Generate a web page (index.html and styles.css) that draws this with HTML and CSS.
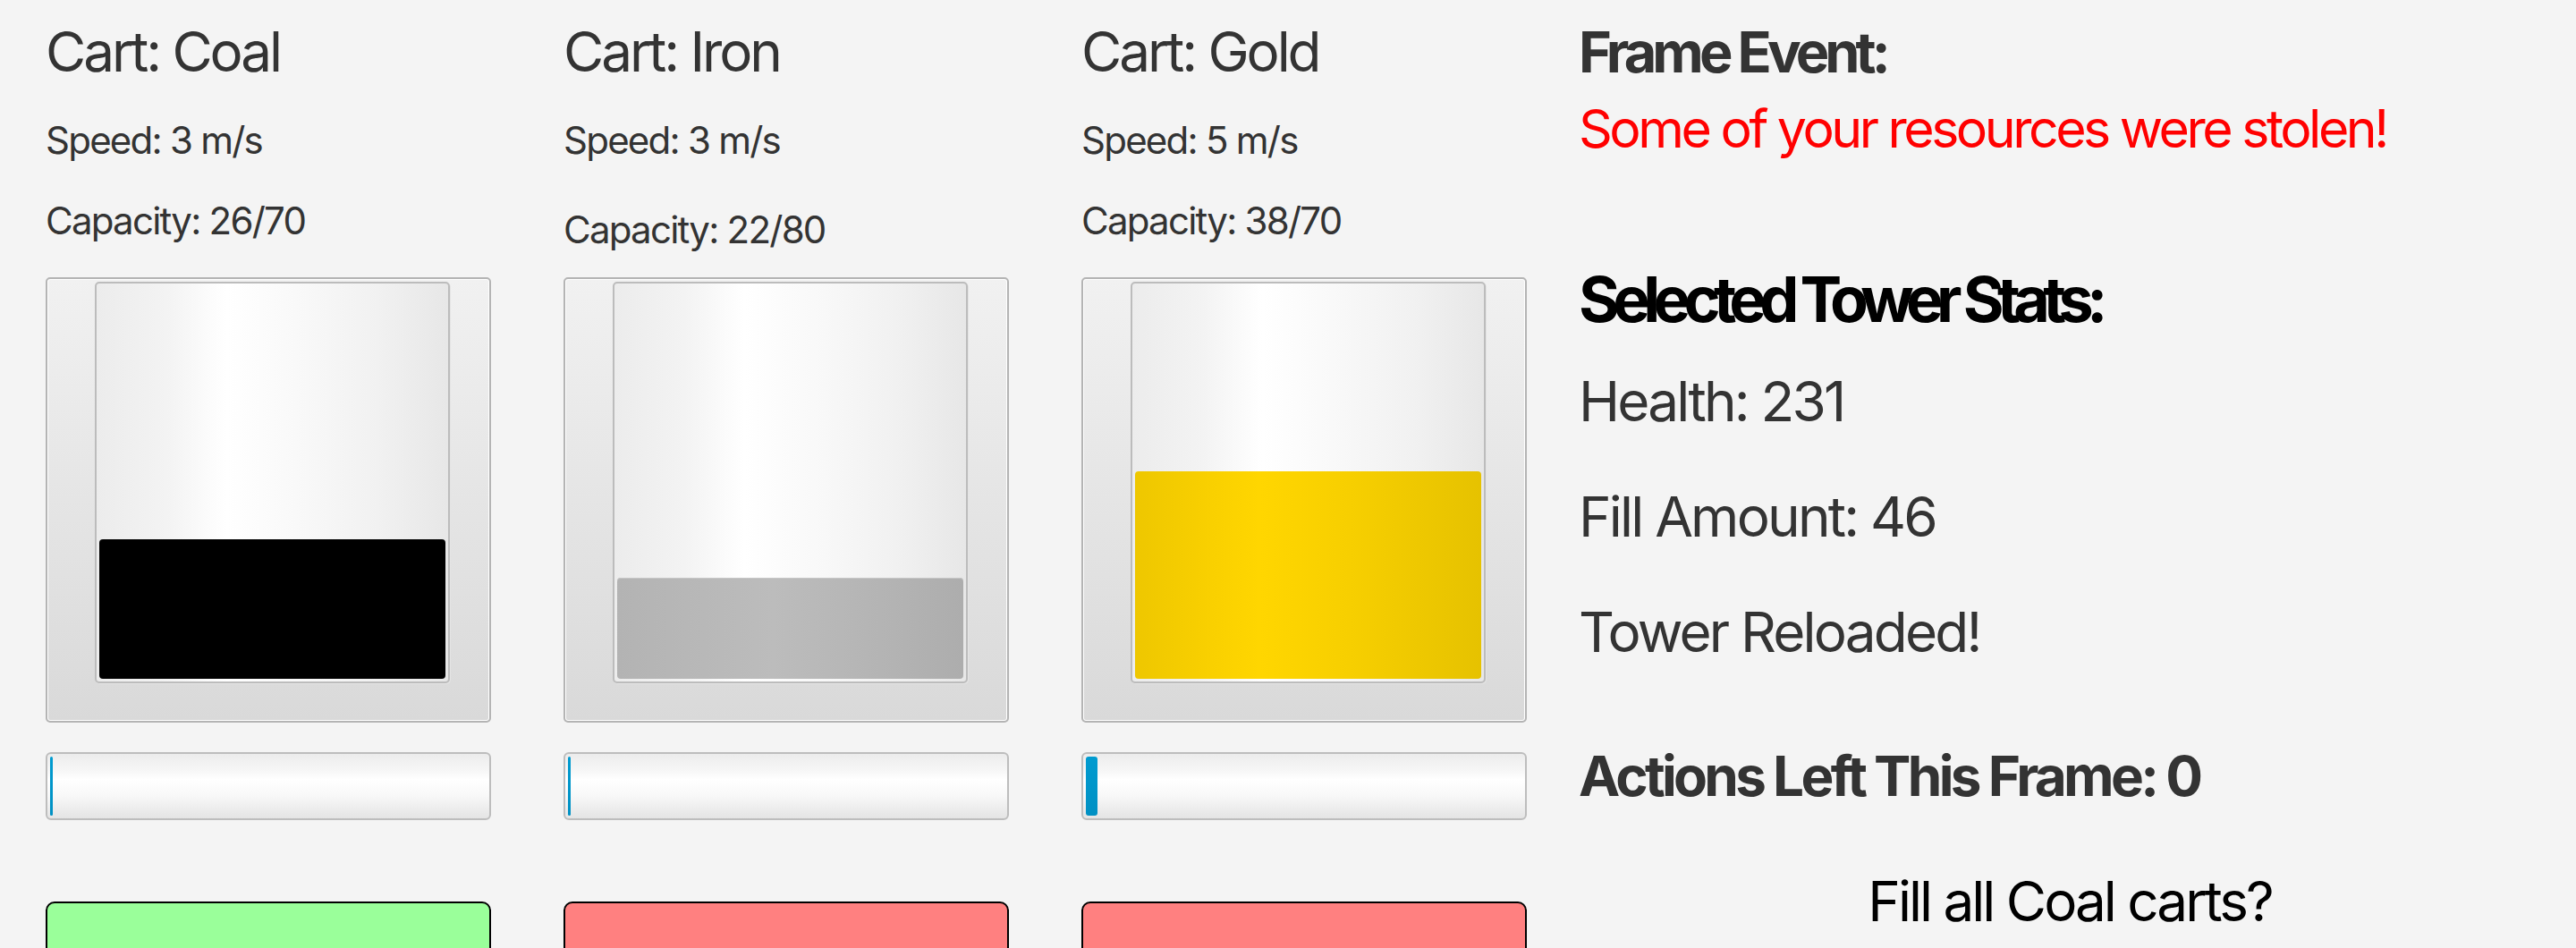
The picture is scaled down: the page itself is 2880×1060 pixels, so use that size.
FILE: index.html
```html
<!DOCTYPE html>
<html lang="en">
<head>
    <meta charset="UTF-8">
    <title>Mine Carts</title>
    <link rel="stylesheet" href="styles.css">
</head>
<body>

<div class="screen">
    <div class="carts">
        <div class="cart">
            <div class="cart-head">
                <div class="cart-title">Cart: Coal</div>
                <div class="cart-stat speed">Speed: 3 m/s</div>
                <div class="cart-stat capacity">Capacity: 26/70</div>
            </div>
            <div class="cart-box">
                <div class="tube">
                    <div class="fill coal" style="height: 156px"></div>
                </div>
            </div>
            <div class="progress"><div class="progress-bar" style="width: 3px"></div></div>
            <button class="cart-button ready"></button>
        </div>

        <div class="cart">
            <div class="cart-head">
                <div class="cart-title">Cart: Iron</div>
                <div class="cart-stat speed">Speed: 3 m/s</div>
                <div class="cart-stat capacity shifted">Capacity: 22/80</div>
            </div>
            <div class="cart-box">
                <div class="tube">
                    <div class="fill iron" style="height: 113px"></div>
                </div>
            </div>
            <div class="progress"><div class="progress-bar" style="width: 3px"></div></div>
            <button class="cart-button blocked"></button>
        </div>

        <div class="cart">
            <div class="cart-head">
                <div class="cart-title">Cart: Gold</div>
                <div class="cart-stat speed">Speed: 5 m/s</div>
                <div class="cart-stat capacity">Capacity: 38/70</div>
            </div>
            <div class="cart-box">
                <div class="tube">
                    <div class="fill gold" style="height: 232px"></div>
                </div>
            </div>
            <div class="progress"><div class="progress-bar" style="width: 13px"></div></div>
            <button class="cart-button blocked"></button>
        </div>
    </div>

    <div class="stats">
        <div class="heading">Frame Event:</div>
        <div class="event">Some of your resources were stolen!</div>
        <div class="heading tower">Selected Tower Stats:</div>
        <div class="stat health">Health: 231</div>
        <div class="stat">Fill Amount: 46</div>
        <div class="stat">Tower Reloaded!</div>
        <div class="heading actions">Actions Left This Frame: 0</div>
        <div class="question">Fill all Coal carts?</div>
    </div>
</div>

</body>
</html>
```

FILE: styles.css
```css
body {
    margin: 0;
    background-color: #f4f4f4;
    font-family: Inter, "Noto Sans", sans-serif;
    color: #333;
}
.screen {
    display: flex;
    padding-left: 51px;
    height: 1060px;
    overflow: hidden;
}
.carts {
    display: flex;
    gap: 81px;
}
.cart {
    width: 498px;
}
.cart-head {
    height: 310px;
    box-sizing: border-box;
    padding-top: 20px;
}
.cart-title {
    font-size: 62px;
    line-height: 76px;
    letter-spacing: -0.05em;
}
.cart-stat {
    font-size: 42px;
    line-height: 50px;
    letter-spacing: -0.042em;
}
.speed {
    margin-top: 36px;
}
.capacity {
    margin-top: 40px;
}
.capacity.shifted {
    margin-top: 50px;
}
.cart-box {
    box-sizing: border-box;
    height: 498px;
    border: 2px solid #b4b4b4;
    border-radius: 5px;
    box-shadow: inset 0 0 0 1px #fff;
    background: linear-gradient(#f1f1f1, #d9d9d9);
    padding: 3px 0 0 53px;
}
.tube {
    box-sizing: border-box;
    width: 397px;
    height: 449px;
    border: 2px solid #bcbcbc;
    border-radius: 5px;
    box-shadow: 1px 1px 0 #e4e4e4;
    padding: 3px;
    display: flex;
    flex-direction: column;
    justify-content: flex-end;
    background: linear-gradient(90deg, #ececec, #f3f3f3 20%, #fff 37%, #f8f8f8 60%, #f1f1f1 80%, #e7e7e7);
}
.fill {
    border-radius: 4px;
}
.fill.coal {
    background-color: #000;
}
.fill.iron {
    background: linear-gradient(90deg, #b3b3b3, #b9b9b9 30%, #bcbcbc 45%, #b3b3b3 80%, #adadad);
    box-shadow: inset 0 1px 0 #c6c6c6;
}
.fill.gold {
    background: linear-gradient(90deg, #eec700, #f9d000 22%, #ffd600 36%, #f7cf00 62%, #eec800 82%, #e6c200);
}
.progress {
    box-sizing: border-box;
    margin-top: 33px;
    height: 76px;
    border: 2px solid #bdbdbd;
    border-radius: 6px;
    padding: 3px;
    background: linear-gradient(#ececec, #f6f6f6 25%, #fff 40%, #f8f8f8 65%, #e4e4e4);
}
.progress-bar {
    height: 100%;
    border-radius: 3px;
    background: linear-gradient(#009bd0, #0090c3);
}
.cart-button {
    display: block;
    width: 498px;
    height: 100px;
    margin-top: 91px;
    border: 2px solid #000;
    border-radius: 10px;
    padding: 0;
}
.cart-button.ready {
    background-color: #9aff9a;
}
.cart-button.blocked {
    background-color: #ff8080;
}
.stats {
    flex: 1;
    margin-left: 58px;
    padding-right: 17px;
    padding-top: 20px;
}
.heading {
    font-size: 63px;
    line-height: 76px;
    font-weight: 700;
    letter-spacing: -0.078em;
}
.event {
    margin-top: 12px;
    font-size: 59px;
    line-height: 72px;
    letter-spacing: -0.059em;
    color: #ff0000;
}
.heading.tower {
    margin-top: 110px;
    font-size: 70px;
    line-height: 90px;
    letter-spacing: -0.11em;
    color: #000;
}
.stat {
    margin-top: 53px;
    font-size: 62px;
    line-height: 76px;
    letter-spacing: -0.045em;
}
.stat.health {
    margin-top: 31px;
}
.heading.actions {
    margin-top: 85px;
    font-size: 62px;
    letter-spacing: -0.06em;
}
.question {
    margin-top: 64px;
    font-size: 62px;
    line-height: 76px;
    letter-spacing: -0.048em;
    color: #000;
    text-align: center;
}
```
